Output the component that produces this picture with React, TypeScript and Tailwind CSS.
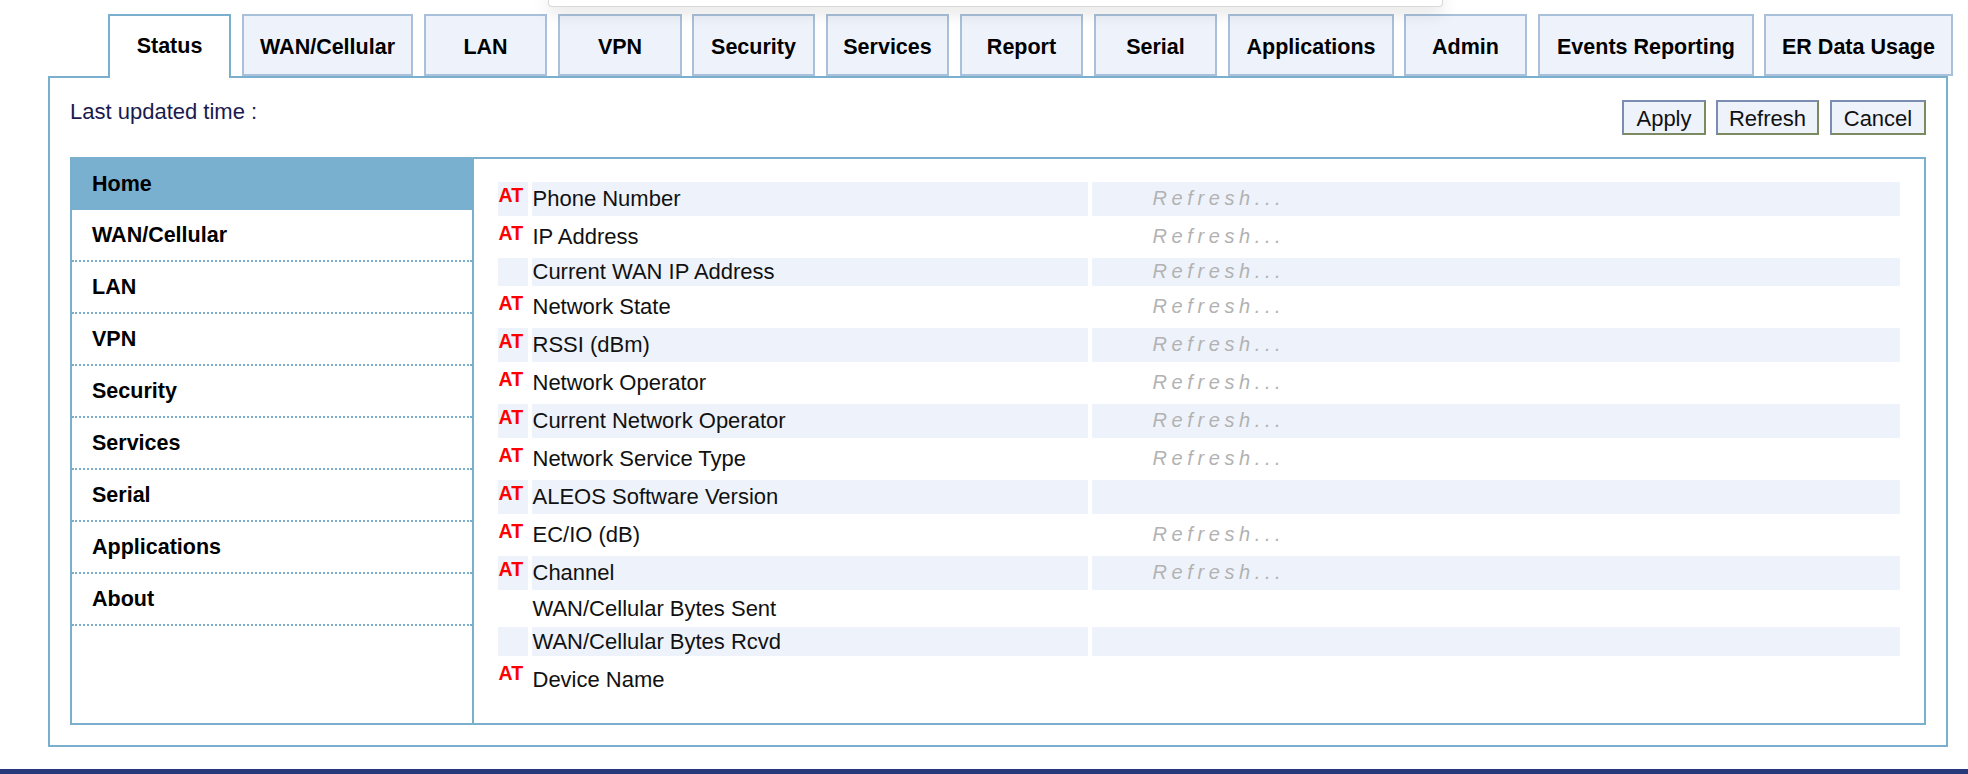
import React from "react";

const tabs: { label: string; w: string; ml: string; active?: boolean }[] = [
  { label: "Status", w: "w-[123px]", ml: "ml-0", active: true },
  { label: "WAN/Cellular", w: "w-[171px]", ml: "ml-[11px]" },
  { label: "LAN", w: "w-[123px]", ml: "ml-[11px]" },
  { label: "VPN", w: "w-[124px]", ml: "ml-[11px]" },
  { label: "Security", w: "w-[123px]", ml: "ml-[10px]" },
  { label: "Services", w: "w-[123px]", ml: "ml-[11px]" },
  { label: "Report", w: "w-[123px]", ml: "ml-[11px]" },
  { label: "Serial", w: "w-[123px]", ml: "ml-[11px]" },
  { label: "Applications", w: "w-[166px]", ml: "ml-[11px]" },
  { label: "Admin", w: "w-[123px]", ml: "ml-[10px]" },
  { label: "Events Reporting", w: "w-[216px]", ml: "ml-[11px]" },
  { label: "ER Data Usage", w: "w-[189px]", ml: "ml-[10px]" },
];

const side = ["WAN/Cellular", "LAN", "VPN", "Security", "Services", "Serial", "Applications", "About"];

const rows: { at: boolean; label: string; v: boolean; h: string }[] = [
  { at: true, label: "Phone Number", v: true, h: "h-[34px]" },
  { at: true, label: "IP Address", v: true, h: "h-[34px]" },
  { at: false, label: "Current WAN IP Address", v: true, h: "h-[28px]" },
  { at: true, label: "Network State", v: true, h: "h-[34px]" },
  { at: true, label: "RSSI (dBm)", v: true, h: "h-[34px]" },
  { at: true, label: "Network Operator", v: true, h: "h-[34px]" },
  { at: true, label: "Current Network Operator", v: true, h: "h-[34px]" },
  { at: true, label: "Network Service Type", v: true, h: "h-[34px]" },
  { at: true, label: "ALEOS Software Version", v: false, h: "h-[34px]" },
  { at: true, label: "EC/IO (dB)", v: true, h: "h-[34px]" },
  { at: true, label: "Channel", v: true, h: "h-[34px]" },
  { at: false, label: "WAN/Cellular Bytes Sent", v: false, h: "h-[29px]" },
  { at: false, label: "WAN/Cellular Bytes Rcvd", v: false, h: "h-[29px]" },
  { at: true, label: "Device Name", v: false, h: "h-[40px]" },
];

function Btn({ label, w }: { label: string; w: string }) {
  return (
    <div
      className={`${w} h-[35px] flex items-center justify-center pt-[2px] bg-[#eef3fb] border-2 border-t-[#7b8db0] border-l-[#7b8db0] border-r-[#7c8a62] border-b-[#7c8a62] text-[22px] leading-none text-[#111]`}
    >
      {label}
    </div>
  );
}

export default function App() {
  return (
    <div className="relative w-[1968px] h-[774px] bg-white overflow-hidden font-['Liberation_Sans',Arial,sans-serif] text-black">
      {/* overlay popup edge at top */}
      <div className="absolute left-[548px] top-0 w-[895px] h-[7px] bg-white rounded-b-[4px] border border-t-0 border-[#d8d8d8] shadow-[0_3px_18px_rgba(0,0,0,0.22)] z-20" />

      <div className="pt-[14px] pl-[48px]">
        {/* tabs */}
        <div className="relative z-10 flex items-start h-[62px] pl-[60px]">
          {tabs.map((t) =>
            t.active ? (
              <div
                key={t.label}
                className={`${t.w} ${t.ml} h-[64px] mb-[-2px] pb-[1px] bg-white border-2 border-b-0 border-[#7ab0ce] flex items-center justify-center text-[21.5px] font-bold`}
              >
                {t.label}
              </div>
            ) : (
              <div
                key={t.label}
                className={`${t.w} ${t.ml} h-[62px] pt-[4px] bg-[#eef3fb] border-2 border-[#a8c0da] flex items-center justify-center text-[21.5px] font-bold`}
              >
                {t.label}
              </div>
            )
          )}
        </div>

        {/* panel */}
        <div className="w-[1900px] h-[671px] border-2 border-[#7ab0ce] px-[20px]">
          <div className="h-[79px] flex justify-between items-start">
            <div className="mt-[21px] text-[22px] leading-[26px] text-[#1a1a4e]">Last updated time :</div>
            <div className="mt-[22px] flex">
              <Btn label="Apply" w="w-[84px]" />
              <div className="w-[10px]" />
              <Btn label="Refresh" w="w-[103px]" />
              <div className="w-[11px]" />
              <Btn label="Cancel" w="w-[96px]" />
            </div>
          </div>

          <div className="h-[568px] border-2 border-[#7ab0ce] flex">
            {/* sidebar */}
            <div className="w-[402px] border-r-2 border-[#7ab0ce] flex flex-col">
              <div className="h-[51px] bg-[#7ab0cf] flex items-center pl-[20px] text-[21.5px] font-bold">Home</div>
              {side.map((s) => (
                <div
                  key={s}
                  className="h-[52px] border-b-2 border-dotted border-[#7ab0ce] flex items-center pl-[20px] text-[21.5px] font-bold"
                >
                  {s}
                </div>
              ))}
            </div>

            {/* content */}
            <div className="flex-1 pl-[19.5px] pt-[19px]">
              <table className="table-fixed w-[1410px] border-separate border-spacing-[4px]">
                <tbody>
                  {rows.map((r, i) => {
                    const bg = i % 2 === 0 ? "bg-[#eef3fb]" : "bg-white";
                    return (
                      <tr key={r.label}>
                        <td className={`${bg} ${r.h} w-[30px] p-0 pl-[1px] pt-[3px] align-top`}>
                          {r.at && (
                            <span className="block text-[19.5px] leading-[21px] font-bold text-[#ff0000]">AT</span>
                          )}
                        </td>
                        <td className={`${bg} ${r.h} w-[556px] p-0 pl-[1px] align-middle text-[22px] leading-[26px] text-[#111]`}>
                          {r.label}
                        </td>
                        <td className={`${bg} ${r.h} w-[808px] p-0 pl-[61px] align-middle`}>
                          {r.v && (
                            <span className="italic text-[20px] leading-[24px] tracking-[4.6px] text-[#b2b2b2]">Refresh...</span>
                          )}
                        </td>
                      </tr>
                    );
                  })}
                </tbody>
              </table>
            </div>
          </div>
        </div>
      </div>

      <div className="mt-[22px] h-[5px] w-full bg-[#27397b]" />
    </div>
  );
}
